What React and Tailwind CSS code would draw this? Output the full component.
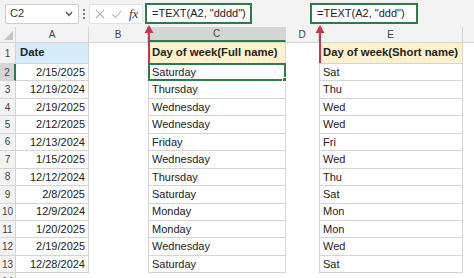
import React from "react";

const rows = [
  ["2/15/2025", "Saturday", "Sat"],
  ["12/19/2024", "Thursday", "Thu"],
  ["2/19/2025", "Wednesday", "Wed"],
  ["2/12/2025", "Wednesday", "Wed"],
  ["12/13/2024", "Friday", "Fri"],
  ["1/15/2025", "Wednesday", "Wed"],
  ["12/12/2024", "Thursday", "Thu"],
  ["2/8/2025", "Saturday", "Sat"],
  ["12/9/2024", "Monday", "Mon"],
  ["1/20/2025", "Monday", "Mon"],
  ["2/19/2025", "Wednesday", "Wed"],
  ["12/28/2024", "Saturday", "Sat"],
];

function Arrow({ left }) {
  return (
    <svg
      className="absolute top-[25px]"
      style={{ left: left - 5 }}
      width="10"
      height="38"
      viewBox="0 0 10 38"
    >
      <line x1="5" y1="6" x2="5" y2="38" stroke="#c9354a" strokeWidth="2" />
      <polygon points="5,0 0.5,8 9.5,8" fill="#c9354a" />
    </svg>
  );
}

export default function App() {
  return (
    <div
      className="relative w-[474px] h-[278px] overflow-hidden bg-white text-[#222]"
      style={{ fontFamily: '"Liberation Sans", Arial, sans-serif' }}
    >
      {/* Toolbar */}
      <div className="flex items-center h-[27px] bg-[#f3f3f3] pl-[5px]">
        <div className="flex items-center justify-between w-[74px] h-[20px] bg-white border border-[#cfcfcf] rounded-[2px] pl-[4px] pr-[5px]">
          <span className="text-[11px] text-[#333]">C2</span>
          <svg width="8" height="6" viewBox="0 0 8 6">
            <polyline points="1,1 4,4.5 7,1" fill="none" stroke="#555" strokeWidth="1.2" />
          </svg>
        </div>
        <div className="flex flex-col items-center justify-center gap-[2px] w-[10px] h-[20px]">
          <span className="w-[2px] h-[2px] bg-[#555] rounded-full" />
          <span className="w-[2px] h-[2px] bg-[#555] rounded-full" />
          <span className="w-[2px] h-[2px] bg-[#555] rounded-full" />
        </div>
        <div className="flex items-center h-[20px] w-[54px] bg-white border border-[#e2e2e2] rounded-[2px] pl-[4px]">
          <svg width="12" height="12" viewBox="0 0 12 12">
            <path d="M2 2 L10 10 M10 2 L2 10" stroke="#b5b5b5" strokeWidth="1.1" />
          </svg>
          <svg width="12" height="12" viewBox="0 0 12 12" className="ml-[5px]">
            <polyline points="1.5,6.5 4.5,9.5 10.5,2.5" fill="none" stroke="#b5b5b5" strokeWidth="1.1" />
          </svg>
          <span
            className="ml-[6px] text-[13px] italic text-[#333]"
            style={{ fontFamily: '"Liberation Serif", serif' }}
          >
            fx
          </span>
        </div>
        <div className="ml-[2px] flex items-center h-[21px] w-[107px] bg-white border-2 border-[#2f7a4c] pl-[5px] text-[11px]">
          =TEXT(A2, "dddd")
        </div>
        <div className="ml-[58px] flex items-center h-[21px] w-[108px] bg-white border-2 border-[#2f7a4c] pl-[5px] text-[11px]">
          =TEXT(A2, "ddd")
        </div>
      </div>

      {/* Column headers */}
      <div className="flex h-[16px] bg-[#f3f3f3] text-[10px] text-[#444] border-b border-[#d4d4d4]">
        <div className="relative w-[16px] border-r border-[#d4d4d4]">
          <svg className="absolute right-[2px] bottom-[2px]" width="9" height="9" viewBox="0 0 9 9">
            <polygon points="9,0 9,9 0,9" fill="#c4c4c4" />
          </svg>
        </div>
        <div className="w-[73px] flex items-center justify-center border-r border-[#d4d4d4]">A</div>
        <div className="w-[59px] flex items-center justify-center border-r border-[#d4d4d4]">B</div>
        <div className="w-[138px] flex items-center justify-center bg-[#d5d5d5] border-b-2 border-[#2f7a4c] border-r border-r-[#d4d4d4]">C</div>
        <div className="w-[33px] flex items-center justify-center border-r border-[#d4d4d4]">D</div>
        <div className="w-[144px] flex items-center justify-center border-r border-[#d4d4d4]">E</div>
        <div className="flex-1" />
      </div>

      {/* Row 1 */}
      <div className="flex h-[21px] text-[11px]">
        <div className="w-[16px] flex items-end justify-center pb-[2px] bg-[#f3f3f3] text-[10px] text-[#444] border-r border-b border-[#d4d4d4]">1</div>
        <div className="w-[73px] flex items-end pb-[2px] pl-[4px] bg-[#d4ebfa] font-bold text-[11.3px] border-r border-b border-[#d4d4d4]">Date</div>
        <div className="w-[59px]" />
        <div className="w-[138px] flex items-end pb-[2px] pl-[3px] bg-[#fff2cc] font-bold text-[11.3px] border-l border-r border-b border-[#d4d4d4] whitespace-nowrap">Day of week(Full name)</div>
        <div className="w-[33px]" />
        <div className="w-[144px] flex items-end pb-[2px] pl-[3px] bg-[#fff2cc] font-bold text-[11.3px] border-l border-r border-b border-[#d4d4d4] whitespace-nowrap">Day of week(Short name)</div>
        <div className="flex-1" />
      </div>

      {/* Data rows */}
      {rows.map((r, i) => {
        const sel = i === 0;
        return (
          <div key={i} className="flex h-[17.45px] text-[11px]">
            <div
              className={
                sel
                  ? "w-[16px] flex items-center justify-center bg-[#d5d5d5] text-[10px] text-[#444] border-r-2 border-r-[#2f7a4c] border-b border-b-[#d4d4d4]"
                  : "w-[16px] flex items-center justify-center bg-[#f3f3f3] text-[10px] text-[#444] border-r border-b border-[#d4d4d4]"
              }
            >
              {i + 2}
            </div>
            <div className="w-[73px] flex items-center justify-end pr-[3px] border-r border-b border-[#d4d4d4]">{r[0]}</div>
            <div className="w-[59px]" />
            {sel ? (
              <div className="relative w-[138px] flex items-center pl-[2px] border-2 border-[#2f7a4c] -mt-px h-[18.45px]">
                {r[1]}
                <span className="absolute -right-[3px] -bottom-[3px] w-[5px] h-[5px] bg-[#2f7a4c] border border-white" />
              </div>
            ) : (
              <div className="w-[138px] flex items-center pl-[3px] border-l border-r border-b border-[#d4d4d4]">{r[1]}</div>
            )}
            <div className="w-[33px]" />
            <div className="w-[144px] flex items-center pl-[3px] border-l border-r border-b border-[#d4d4d4]">{r[2]}</div>
            <div className="flex-1" />
          </div>
        );
      })}

      {/* Row 14 */}
      <div className="flex h-[17px] text-[10px] text-[#444]">
        <div className="w-[16px] flex items-center justify-center bg-[#f3f3f3] border-r border-[#d4d4d4]">14</div>
      </div>

      <Arrow left={149} />
      <Arrow left={319.5} />
    </div>
  );
}
